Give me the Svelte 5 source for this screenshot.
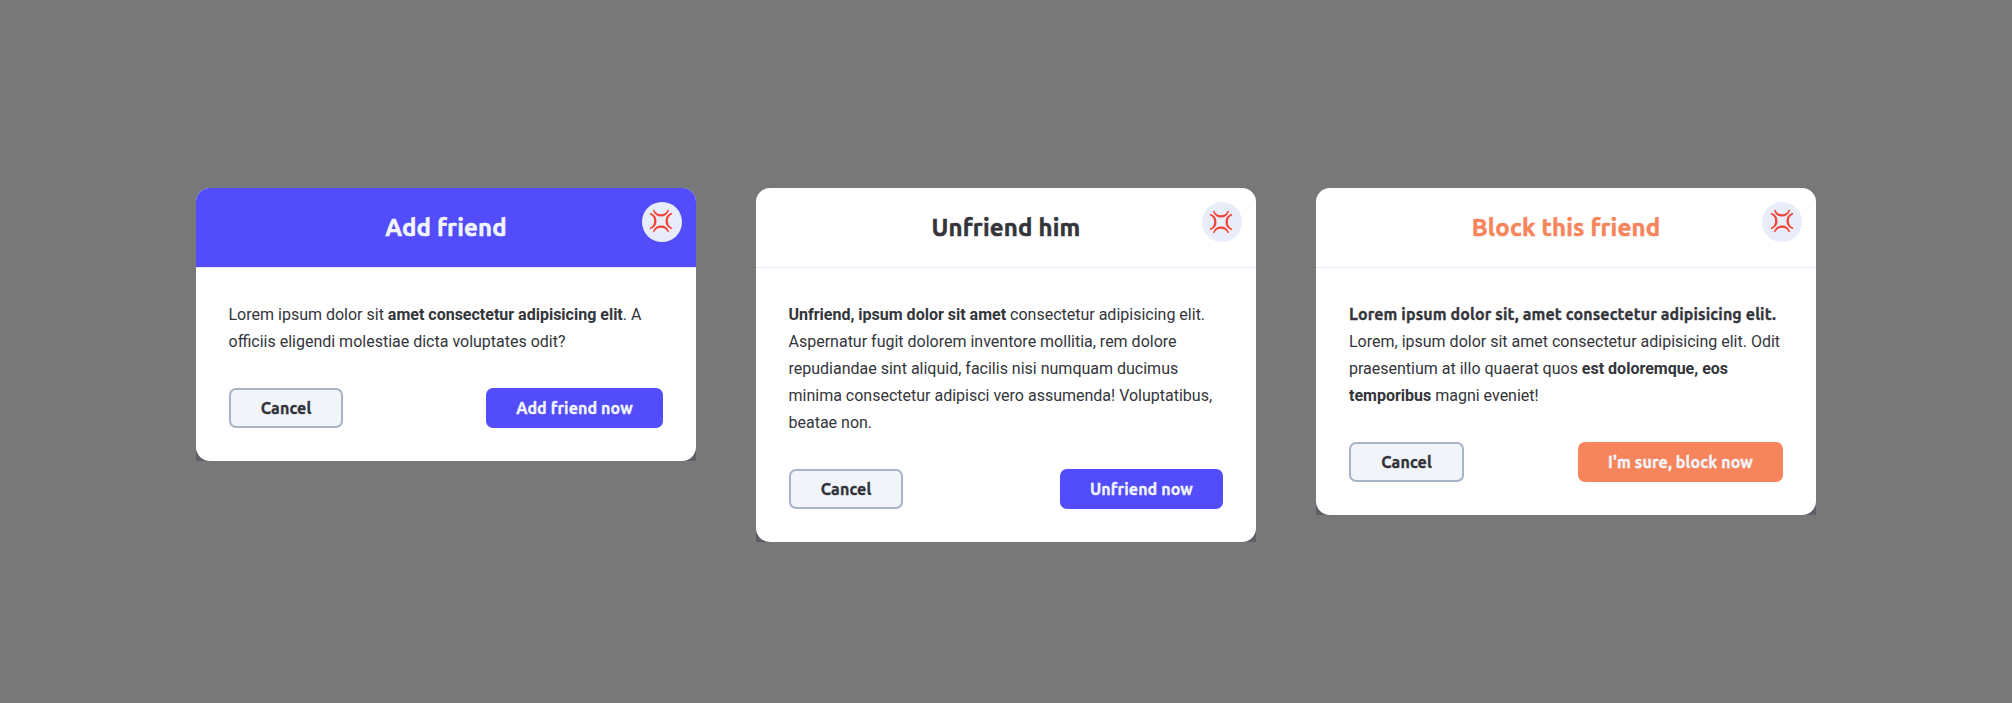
<script>
  const dialogs = [
    {
      kind: 'add',
      title: 'Add friend',
      body: [
        { text: 'Lorem ipsum dolor sit ' },
        { text: 'amet consectetur adipisicing elit', tone: 'strong' },
        { text: '. A officiis eligendi molestiae dicta voluptates odit?' }
      ],
      action: 'Add friend now'
    },
    {
      kind: 'unfriend',
      title: 'Unfriend him',
      body: [
        { text: 'Unfriend, ipsum dolor sit amet', tone: 'strong' },
        { text: ' consectetur adipisicing elit. Aspernatur fugit dolorem inventore mollitia, rem dolore repudiandae sint aliquid, facilis nisi numquam ducimus minima consectetur adipisci vero assumenda! Voluptatibus, beatae non.' }
      ],
      action: 'Unfriend now'
    },
    {
      kind: 'block',
      title: 'Block this friend',
      body: [
        { text: 'Lorem ipsum dolor sit, amet consectetur adipisicing elit.', tone: 'lead' },
        { text: ' Lorem, ipsum dolor sit amet consectetur adipisicing elit. Odit praesentium at illo quaerat quos ' },
        { text: 'est doloremque, eos temporibus', tone: 'strong' },
        { text: ' magni eveniet!' }
      ],
      action: "I'm sure, block now"
    }
  ];
</script>

<main>
  {#each dialogs as d}
    <div class="backing {d.kind}">
      <section class="card">
        <header>
          <h2>{d.title}</h2>
          <button class="close" aria-label="Close">
            <svg viewBox="0 0 24 24" width="24" height="24">
              {#each [0, 90, 180, 270] as angle}
                <path transform="rotate({angle} 12 12)" d="M4.8 1.5C7.4 8.5 16.6 8.5 19.2 1.5C16.6 7.4 7.4 7.4 4.8 1.5Z" />
              {/each}
            </svg>
          </button>
        </header>
        <div class="content">
          <p>{#each d.body as part}<span class={part.tone ?? 'plain'}>{part.text}</span>{/each}</p>
          <footer>
            <button class="cancel"><span class="label">Cancel</span></button>
            <button class="primary"><span class="label">{d.action}</span></button>
          </footer>
        </div>
      </section>
    </div>
  {/each}
</main>

<style>
  :global(body) { background: #787878; }
  main {
    min-height: 703px;
    box-sizing: border-box;
    padding-top: 188px;
    display: flex;
    justify-content: center;
    align-items: flex-start;
    gap: 60px;
    font: 16px/27px Roboto, sans-serif;
    color: #33353b;
  }
  .backing {
    width: 500px;
    border-radius: 14px 14px 0 0;
    background: linear-gradient(transparent 50%, #5c5f66 50%);
  }
  .card {
    border-radius: 14px;
    overflow: hidden;
    background: #fff;
  }
  header {
    position: relative;
    height: 79px;
    border-bottom: 1px solid #e6ebf9;
    display: flex;
    align-items: center;
    justify-content: center;
  }
  .add header { background: #524cfb; background-clip: padding-box; color: #f1f5fb; }
  .block header { color: #f6855c; }
  h2 {
    margin: 0;
    font: 700 24px/32px Ubuntu, "Noto Sans", sans-serif;
    letter-spacing: 0.19px;
    -webkit-text-stroke: 0.55px currentColor;
    white-space: nowrap;
  }
  button { box-sizing: border-box; border: 0; margin: 0; padding: 0; }
  .close {
    position: absolute;
    top: 14px;
    right: 14px;
    width: 40px;
    height: 40px;
    border-radius: 50%;
    background: #e8edf9;
    display: grid;
    place-items: center;
  }
  .close svg { margin: -2px 1.5px 0 0; }
  .unfriend .close svg { margin-top: 0; }
  .block .close svg { margin-right: 0; }
  .close path { fill: #f44336; stroke: #f44336; stroke-width: 1.5; stroke-linejoin: round; }
  .content { padding: 33px; }
  p { margin: 0 0 33px; }
  .add p, .unfriend p { margin-left: -0.5px; }
  .strong { font-weight: 700; }
  .lead {
    font-family: Ubuntu, "Noto Sans", sans-serif;
    font-weight: 700;
    line-height: 20px;
    letter-spacing: 0.115px;
    -webkit-text-stroke: 0.35px currentColor;
  }
  footer { display: flex; justify-content: space-between; }
  footer button {
    height: 40px;
    border-radius: 7px;
    display: flex;
    align-items: center;
    justify-content: center;
    font: 700 16px/20px Ubuntu, "Noto Sans", sans-serif;
    letter-spacing: 0.12px;
    -webkit-text-stroke: 0.35px currentColor;
    white-space: nowrap;
  }
  .cancel { width: 114px; border: 2px solid #a8b3c6; background: #f1f5fa; color: #303238; }
  .primary { width: 177px; background: #524cfb; color: #f1f5fb; }
  .unfriend .primary { width: 163px; }
  .block .primary { width: 205px; background: #f6855c; }
  .block .cancel { width: 115px; }
</style>
